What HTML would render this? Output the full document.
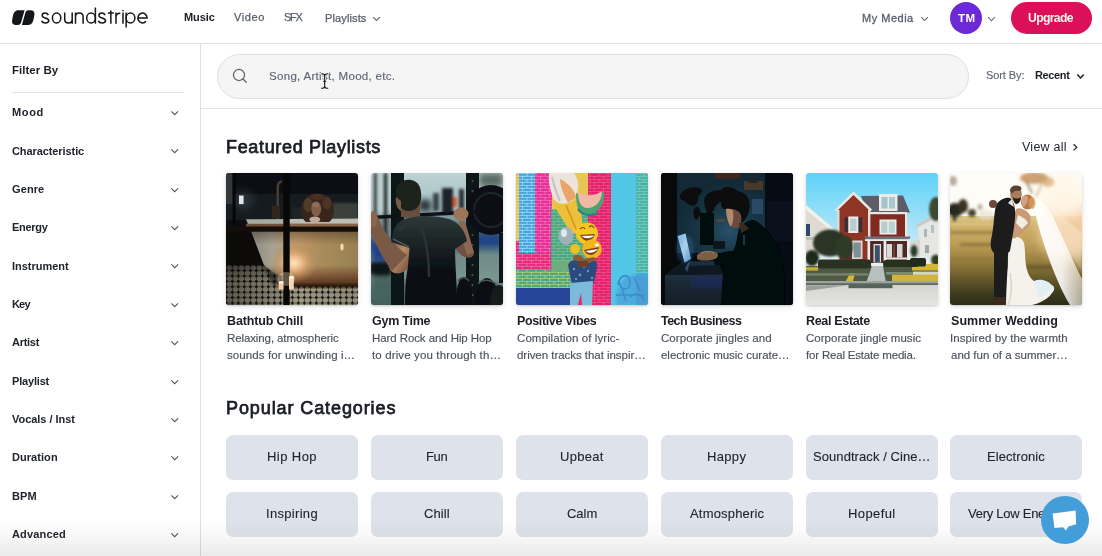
<!DOCTYPE html>
<html lang="en">
<head>
<meta charset="utf-8">
<title>Soundstripe</title>
<style>
*{box-sizing:border-box;margin:0;padding:0}
html,body{width:1102px;height:556px;overflow:hidden;background:#fff}
body{font-family:"Liberation Sans",sans-serif;color:#1b1e25;position:relative;font-size:12px}
.t{position:absolute;white-space:nowrap;line-height:20px;height:20px;will-change:transform}
.a{position:absolute}
#hdrline{left:0;top:43px;width:1102px;height:1px;background:#dcdfe5}
#sideline{left:200px;top:44px;width:1px;height:512px;background:#dcdfe5}
#fline{left:12px;top:92px;width:172px;height:1px;background:#dfe2e8}
#sline{left:201px;top:108px;width:901px;height:1px;background:#e1e4ea}
#avatar{left:950px;top:2px;width:32px;height:32px;border-radius:50%;background:#6c2ad6}
#upg{left:1011px;top:2px;width:81px;height:31.5px;border-radius:16px;background:#dc0f5a}
#sbox{left:217px;top:54px;width:752px;height:44.5px;border-radius:22.5px;background:#f5f5f6;border:1px solid #dcdfe6}
.card{position:absolute;top:173px;width:132px;height:132px;border-radius:3px;overflow:hidden;box-shadow:0 1px 2px rgba(20,25,35,.16),0 2px 6px rgba(20,25,35,.10)}
.card svg{display:block;width:132px;height:132px}
.cat{position:absolute;width:132.2px;height:45px;border-radius:7px;background:#dee2ea}
#fade{left:0;top:520px;width:1102px;height:36px;background:linear-gradient(to bottom,rgba(90,90,90,0),rgba(90,90,90,.04) 40%,rgba(90,90,90,.12))}
#chat{left:1041.2px;top:496.3px;width:47.6px;height:47.6px;border-radius:50%;background:#439dd9}
svg.i{position:absolute;overflow:visible}
</style>
</head>
<body>
<!-- header -->
<svg class="i" style="left:0;top:0" width="160" height="40" viewBox="0 0 160 40">
<g fill="#15161a">
<path id="lg" d="M18.2 10.3 L24.6 10.2 L21.1 22.6 Q20.4 25.0 18.2 25.0 L16.0 25.0 C13.0 25.0 11.6 23.0 12.1 20.4 L12.7 17.0 C13.6 12.4 15.2 10.3 18.2 10.3 Z"/>
<path d="M18.2 10.3 L24.6 10.2 L21.1 22.6 Q20.4 25.0 18.2 25.0 L16.0 25.0 C13.0 25.0 11.6 23.0 12.1 20.4 L12.7 17.0 C13.6 12.4 15.2 10.3 18.2 10.3 Z" transform="rotate(180 23.25 17.6)"/>
</g>
<g fill="none" stroke="#15161a" stroke-width="1.5">
<path d="M48.3 15.1 C47.7 13.8 46.6 13.1 45.1 13.1 C43.3 13.1 42.2 14.1 42.2 15.5 C42.2 17.0 43.6 17.5 45.2 17.9 C47.1 18.4 48.8 18.9 48.8 20.6 C48.8 22.1 47.4 23.0 45.4 23.0 C43.5 23.0 42.2 22.2 41.5 20.8"/>
<ellipse cx="56.6" cy="18.05" rx="4.2" ry="4.95"/>
<path d="M64.7 12.4 L64.7 19.2 C64.7 21.5 66.2 23.0 68.45 23.0 C70.7 23.0 72.2 21.5 72.2 19.2 M72.2 12.4 L72.2 23.7"/>
<path d="M75.5 23.7 L75.5 12.4 M75.5 16.9 C75.5 14.6 77.0 13.1 79.3 13.1 C81.6 13.1 83.1 14.6 83.1 16.9 L83.1 23.7"/>
<ellipse cx="91.05" cy="18.05" rx="4.35" ry="4.95"/>
<path d="M95.4 7.5 L95.4 23.7"/>
<path d="M48.3 15.1 C47.7 13.8 46.6 13.1 45.1 13.1 C43.3 13.1 42.2 14.1 42.2 15.5 C42.2 17.0 43.6 17.5 45.2 17.9 C47.1 18.4 48.8 18.9 48.8 20.6 C48.8 22.1 47.4 23.0 45.4 23.0 C43.5 23.0 42.2 22.2 41.5 20.8" transform="translate(56.75 0)"/>
<path d="M110.85 10.6 L110.85 23.7 M107.8 13.05 L113.8 13.05"/>
<path d="M116.0 23.7 L116.0 12.4 M116.0 17.4 C116.0 14.6 117.5 13.1 120.3 13.2"/>
<path d="M123.0 12.4 L123.0 23.7"/>
<path d="M126.15 12.4 L126.15 27.5"/>
<ellipse cx="130.5" cy="18.05" rx="4.37" ry="4.95"/>
<path d="M137.9 18.05 L147.1 18.05 A4.6 4.95 0 1 0 146.0 21.25"/>
</g>
<circle cx="123.0" cy="10.6" r="0.8" fill="#15161a"/>
</svg>

<div class="a" id="hdrline"></div>
<div class="a" id="avatar"></div>
<div class="a" id="upg"></div>
<svg class="i" style="left:373px;top:16.5px" width="7" height="4" viewBox="0 0 7 4"><path d="M0.2 0.2 L3.5 3.4 L6.8 0.2" fill="none" stroke="#5c626d" stroke-width="1.05"/></svg>
<svg class="i" style="left:921.3px;top:16.8px" width="7" height="4" viewBox="0 0 7 4"><path d="M0.2 0.2 L3.5 3.5 L6.8 0.2" fill="none" stroke="#5c626d" stroke-width="1.05"/></svg>
<svg class="i" style="left:988px;top:17.3px" width="7" height="4.4" viewBox="0 0 7 4.4"><path d="M0.2 0.2 L3.5 3.8 L6.8 0.2" fill="none" stroke="#5c626d" stroke-width="1.05"/></svg>

<!-- sidebar -->
<div class="a" id="sideline"></div>
<div class="a" id="fline"></div>
<svg class="i" style="left:170.8px;top:111px" width="7.4" height="4.4" viewBox="0 0 7.4 4.4"><path d="M0.3 0.3 L3.7 3.7 L7.1 0.3" fill="none" stroke="#4d525c" stroke-width="1.05"/></svg>
<svg class="i" style="left:170.8px;top:149px" width="7.4" height="4.4" viewBox="0 0 7.4 4.4"><path d="M0.3 0.3 L3.7 3.7 L7.1 0.3" fill="none" stroke="#4d525c" stroke-width="1.05"/></svg>
<svg class="i" style="left:170.8px;top:188px" width="7.4" height="4.4" viewBox="0 0 7.4 4.4"><path d="M0.3 0.3 L3.7 3.7 L7.1 0.3" fill="none" stroke="#4d525c" stroke-width="1.05"/></svg>
<svg class="i" style="left:170.8px;top:226px" width="7.4" height="4.4" viewBox="0 0 7.4 4.4"><path d="M0.3 0.3 L3.7 3.7 L7.1 0.3" fill="none" stroke="#4d525c" stroke-width="1.05"/></svg>
<svg class="i" style="left:170.8px;top:264px" width="7.4" height="4.4" viewBox="0 0 7.4 4.4"><path d="M0.3 0.3 L3.7 3.7 L7.1 0.3" fill="none" stroke="#4d525c" stroke-width="1.05"/></svg>
<svg class="i" style="left:170.8px;top:303px" width="7.4" height="4.4" viewBox="0 0 7.4 4.4"><path d="M0.3 0.3 L3.7 3.7 L7.1 0.3" fill="none" stroke="#4d525c" stroke-width="1.05"/></svg>
<svg class="i" style="left:170.8px;top:341px" width="7.4" height="4.4" viewBox="0 0 7.4 4.4"><path d="M0.3 0.3 L3.7 3.7 L7.1 0.3" fill="none" stroke="#4d525c" stroke-width="1.05"/></svg>
<svg class="i" style="left:170.8px;top:380px" width="7.4" height="4.4" viewBox="0 0 7.4 4.4"><path d="M0.3 0.3 L3.7 3.7 L7.1 0.3" fill="none" stroke="#4d525c" stroke-width="1.05"/></svg>
<svg class="i" style="left:170.8px;top:418px" width="7.4" height="4.4" viewBox="0 0 7.4 4.4"><path d="M0.3 0.3 L3.7 3.7 L7.1 0.3" fill="none" stroke="#4d525c" stroke-width="1.05"/></svg>
<svg class="i" style="left:170.8px;top:456px" width="7.4" height="4.4" viewBox="0 0 7.4 4.4"><path d="M0.3 0.3 L3.7 3.7 L7.1 0.3" fill="none" stroke="#4d525c" stroke-width="1.05"/></svg>
<svg class="i" style="left:170.8px;top:495px" width="7.4" height="4.4" viewBox="0 0 7.4 4.4"><path d="M0.3 0.3 L3.7 3.7 L7.1 0.3" fill="none" stroke="#4d525c" stroke-width="1.05"/></svg>
<svg class="i" style="left:170.8px;top:533px" width="7.4" height="4.4" viewBox="0 0 7.4 4.4"><path d="M0.3 0.3 L3.7 3.7 L7.1 0.3" fill="none" stroke="#4d525c" stroke-width="1.05"/></svg>

<!-- search -->
<div class="a" id="sline"></div>
<div class="a" id="sbox"></div>
<svg class="i" style="left:231.8px;top:68.1px" width="16" height="16" viewBox="0 0 16 16"><circle cx="7" cy="7" r="5.55" fill="none" stroke="#59606b" stroke-width="1.25"/><path d="M11.0 11.0 L14.3 14.4" stroke="#59606b" stroke-width="1.3" stroke-linecap="round"/></svg>
<svg class="i" style="left:1077.2px;top:74.4px" width="7" height="5" viewBox="0 0 7 5"><path d="M0.3 0.4 L3.5 3.9 L6.7 0.4" fill="none" stroke="#1b1e25" stroke-width="1.5"/></svg>
<svg class="i" style="left:1072.6px;top:144.3px" width="5" height="7" viewBox="0 0 5 7"><path d="M0.6 0.3 L3.8 3.3 L0.6 6.4" fill="none" stroke="#23272f" stroke-width="1.25"/></svg>

<!-- cards -->
<div class="card" style="left:226.4px"><svg viewBox="0 0 132 132">
<defs>
<filter id="b1a" x="-20%" y="-20%" width="140%" height="140%"><feGaussianBlur stdDeviation="1.2"/></filter>
<filter id="b1b" x="-30%" y="-30%" width="160%" height="160%"><feGaussianBlur stdDeviation="4"/></filter>
<filter id="b1c" x="-30%" y="-30%" width="160%" height="160%"><feGaussianBlur stdDeviation="0.6"/></filter>
<radialGradient id="g1glow" cx="0.5" cy="0.5" r="0.5"><stop offset="0" stop-color="#ffe6c4"/><stop offset="0.3" stop-color="#efbe8c"/><stop offset="0.7" stop-color="#c89860" stop-opacity="0.5"/><stop offset="1" stop-color="#a88850" stop-opacity="0"/></radialGradient>
<linearGradient id="g1tub" x1="0" x2="1" y1="0" y2="0"><stop offset="0" stop-color="#8a8a80"/><stop offset="0.2" stop-color="#a8a290"/><stop offset="0.42" stop-color="#c49a6c"/><stop offset="0.65" stop-color="#aa8c5c"/><stop offset="1" stop-color="#988052"/></linearGradient>
<linearGradient id="g1tubsh" x1="0" x2="0" y1="0" y2="1"><stop offset="0" stop-color="#3a2a1a" stop-opacity="0.45"/><stop offset="0.25" stop-color="#3a2a1a" stop-opacity="0"/><stop offset="0.62" stop-color="#5a2a18" stop-opacity="0"/><stop offset="0.82" stop-color="#5a2a18" stop-opacity="0.55"/><stop offset="1" stop-color="#3a1a0c" stop-opacity="0.85"/></linearGradient>
<pattern id="p1tile" width="6" height="5.4" patternUnits="userSpaceOnUse"><rect width="6" height="5.4" fill="#b4ad94"/><rect x="0" y="0" width="6" height="0.8" fill="#55524a"/><rect x="0" y="0" width="0.8" height="5.4" fill="#55524a"/><rect x="-0.8" y="-0.8" width="2.3" height="2.3" fill="#0e0d0b"/><rect x="5.2" y="-0.8" width="2.3" height="2.3" fill="#0e0d0b"/><rect x="-0.8" y="4.6" width="2.3" height="2.3" fill="#0e0d0b"/><rect x="5.2" y="4.6" width="2.3" height="2.3" fill="#0e0d0b"/></pattern>
<linearGradient id="g1fl" x1="0" x2="1" y1="0" y2="0"><stop offset="0" stop-color="#000" stop-opacity="0.5"/><stop offset="0.3" stop-color="#000" stop-opacity="0.3"/><stop offset="0.55" stop-color="#000" stop-opacity="0.12"/><stop offset="1" stop-color="#000" stop-opacity="0.2"/></linearGradient>
<linearGradient id="g1fl2" x1="0" x2="0" y1="0" y2="1"><stop offset="0" stop-color="#000" stop-opacity="0.35"/><stop offset="1" stop-color="#000" stop-opacity="0"/></linearGradient>
</defs>
<rect width="132" height="132" fill="#0b0e12"/>
<!-- wall band -->
<rect x="0" y="21" width="132" height="26" fill="#151b1f"/>
<rect x="100" y="30" width="32" height="17" fill="#3a3f3a" filter="url(#b1a)"/>
<rect x="66" y="34" width="14" height="12" fill="#1f2526" filter="url(#b1a)"/>
<!-- window glow -->
<ellipse cx="17" cy="27" rx="11" ry="9" fill="#3a4650" opacity="0.55" filter="url(#b1b)"/>
<rect x="13" y="22.5" width="4.6" height="8.6" fill="#dfe7ea" filter="url(#b1c)"/>
<rect x="0" y="0" width="6.6" height="31" fill="#34383a"/><rect x="6.6" y="0" width="3" height="52" fill="#050607"/>
<!-- faucet -->
<path d="M51.8 46 L51.8 14 C51.8 10 53.5 8.5 56 8.5" fill="none" stroke="#4a3c30" stroke-width="2.4" filter="url(#b1c)"/>
<rect x="46" y="33" width="8" height="12" fill="#33281f" filter="url(#b1c)"/>
<!-- left dark below bar -->
<rect x="0" y="56" width="40" height="38" fill="#0d0b09"/>
<!-- floor -->
<rect x="0" y="92.5" width="132" height="40" fill="url(#p1tile)"/>
<rect x="0" y="92.5" width="132" height="40" fill="url(#g1fl)"/>
<rect x="0" y="92.5" width="132" height="16" fill="url(#g1fl2)"/>
<!-- tub body -->
<path d="M25 58 L132 58 L132 113 L66 113 C61 113 59 108 57 103.5 C50 101 42 97 37.5 91 Z" fill="url(#g1tub)"/>
<path d="M25 58 L132 58 L132 113 L66 113 C61 113 59 108 57 103.5 C50 101 42 97 37.5 91 Z" fill="url(#g1tubsh)"/>
<ellipse cx="68" cy="90" rx="24" ry="20" fill="url(#g1glow)"/>
<ellipse cx="116" cy="74" rx="1.6" ry="3.4" fill="#f4dcb0" filter="url(#b1c)"/>
<!-- tub shadow on floor -->
<rect x="62" y="111.5" width="70" height="3.5" fill="#1a0f06" opacity="0.7" filter="url(#b1a)"/><path d="M38 93 C44 99 50 102 57 104.5 L57 112 L46 112 Z" fill="#0c0a08" opacity="0.55" filter="url(#b1a)"/>
<!-- rim -->
<path d="M20 46.3 L132 45.6 L132 51 L22 51 Z" fill="#a7aaa2"/>
<rect x="64" y="46" width="68" height="4.9" fill="#c2c2b8" opacity="0.8"/>
<!-- woman -->
<g filter="url(#b1c)">
<path d="M76 40 C74 30 80 21 90 20.5 C100 20 108 27 108 37 C108 43 106 47 103 49 L80 49 C77 47 76 44 76 40 Z" fill="#37261d"/>
<ellipse cx="82" cy="32" rx="4.5" ry="7" fill="#5e4230" opacity="0.75"/>
<ellipse cx="101" cy="30" rx="4.5" ry="6.5" fill="#563a2a" opacity="0.75"/>
<ellipse cx="91" cy="24" rx="7" ry="3" fill="#4e3628" opacity="0.7"/>
<ellipse cx="90.2" cy="36" rx="5" ry="7.6" fill="#80604c"/>
<ellipse cx="89.5" cy="31.5" rx="3.6" ry="2.6" fill="#94705a" opacity="0.8"/>
<ellipse cx="88.8" cy="46.6" rx="5.4" ry="3.2" fill="#c4a696"/>
</g>
<!-- bars -->
<rect x="20" y="50.8" width="112" height="3" fill="#6e5038"/><rect x="64" y="50.8" width="68" height="3" fill="#8a6446"/><rect x="0" y="53.6" width="132" height="5.1" fill="#140d09"/>
<rect x="57.3" y="0" width="6.4" height="132" fill="#080807"/>
<!-- candles -->
<g filter="url(#b1c)">
<ellipse cx="60" cy="106" rx="9" ry="7" fill="#ffdcb0" opacity="0.35"/>
<rect x="52.7" y="108.5" width="4.8" height="8" fill="#f3c8a4"/>
<rect x="63" y="103.5" width="4.8" height="13" fill="#f6d8b8"/>
<rect x="53" y="108.2" width="4.2" height="2.4" fill="#fff1dc"/>
<rect x="63.3" y="103.2" width="4.2" height="2.6" fill="#fff6e6"/>
</g>
</svg>
</div>
<div class="card" style="left:371.2px"><svg viewBox="0 0 132 132">
<defs>
<filter id="b2a" x="-20%" y="-20%" width="140%" height="140%"><feGaussianBlur stdDeviation="1.6"/></filter>
<filter id="b2b" x="-20%" y="-20%" width="140%" height="140%"><feGaussianBlur stdDeviation="3"/></filter>
<filter id="b2c" x="-20%" y="-20%" width="140%" height="140%"><feGaussianBlur stdDeviation="0.7"/></filter>
<linearGradient id="g2bg" x1="0" x2="0" y1="0" y2="1"><stop offset="0" stop-color="#bcd2d4"/><stop offset="0.27" stop-color="#a8c2c6"/><stop offset="0.4" stop-color="#5d757c"/><stop offset="0.52" stop-color="#2a4a7a"/><stop offset="0.62" stop-color="#6f8a88"/><stop offset="0.8" stop-color="#7a9690"/><stop offset="0.9" stop-color="#4a6664"/><stop offset="1" stop-color="#3f5a58"/></linearGradient>
<linearGradient id="g2sh" x1="0" x2="0" y1="0" y2="1"><stop offset="0" stop-color="#2e3838"/><stop offset="0.3" stop-color="#1c2426"/><stop offset="0.6" stop-color="#0a1016"/><stop offset="1" stop-color="#070c12"/></linearGradient>
<linearGradient id="g2skinL" x1="0" x2="1" y1="0" y2="1"><stop offset="0" stop-color="#7a543c"/><stop offset="0.5" stop-color="#b88a66"/><stop offset="1" stop-color="#6a4430"/></linearGradient>
</defs>
<rect width="132" height="132" fill="url(#g2bg)"/>
<!-- background blobs -->
<g filter="url(#b2b)">
<rect x="0" y="0" width="20" height="40" fill="#bfd0d0"/>
<rect x="0" y="46" width="22" height="20" fill="#7d8f92"/>
<rect x="0" y="68" width="22" height="20" fill="#1d3f86"/>
<rect x="0" y="90" width="22" height="14" fill="#0c1218"/>
<rect x="0" y="106" width="36" height="26" fill="#45635f"/>
<rect x="82" y="62" width="50" height="10" fill="#1f448a"/>
<rect x="108" y="0" width="24" height="14" fill="#5a6a62"/>
<rect x="48" y="27" width="12" height="11" fill="#1c262a"/>
</g>
<g filter="url(#b2a)">
<!-- background people -->
<rect x="71" y="15" width="11" height="26" fill="#1e2428"/>
<rect x="82" y="24" width="3.6" height="10" fill="#c65a2a"/>
<rect x="62" y="20" width="6" height="18" fill="#39424a"/>
<rect x="88" y="16" width="5" height="20" fill="#262c30"/>
<!-- thin bars left -->
<rect x="3" y="0" width="2.5" height="60" fill="#1a2226"/>
<rect x="13" y="0" width="3" height="70" fill="#141a1e"/>
<rect x="0" y="90" width="18" height="10" fill="#0e1418"/>
</g>
<!-- left rack post -->
<rect x="20" y="0" width="13" height="132" fill="#0f1418" filter="url(#b2c)"/>
<!-- right rack post -->
<rect x="95" y="0" width="13" height="132" fill="#0d1216" filter="url(#b2c)"/>
<g fill="#56666c" opacity="0.8"><circle cx="101.5" cy="8" r="1"/><circle cx="101.5" cy="18" r="1"/><circle cx="101.5" cy="28" r="1"/><circle cx="101.5" cy="52" r="1"/><circle cx="101.5" cy="62" r="1"/><circle cx="101.5" cy="72" r="1"/><circle cx="101.5" cy="82" r="1"/><circle cx="101.5" cy="92" r="1"/><circle cx="101.5" cy="102" r="1"/><circle cx="101.5" cy="112" r="1"/><circle cx="101.5" cy="122" r="1"/></g>
<!-- plates -->
<g filter="url(#b2c)">
<circle cx="120" cy="37" r="25" fill="#0b0f13"/>
<circle cx="120" cy="37" r="17" fill="none" stroke="#1d252b" stroke-width="2"/>
<rect x="128" y="60" width="4" height="50" fill="#10161a"/>
<ellipse cx="93" cy="126" rx="8" ry="22" fill="#0c1013"/>
<ellipse cx="116" cy="130" rx="12" ry="25" fill="#0c1013"/>
<ellipse cx="128" cy="132" rx="9" ry="20" fill="#151b1f"/>
<path d="M107 110 C112 106 120 106 126 112" fill="none" stroke="#4a545a" stroke-width="1.6"/>
<path d="M87 108 C90 104 95 104 98 108" fill="none" stroke="#3e484e" stroke-width="1.4"/>
</g>
<!-- barbell -->
<path d="M0 44.5 L112 38.5" stroke="#0e1216" stroke-width="3.4"/>
<!-- man -->
<g filter="url(#b2c)">
<!-- left arm -->
<path d="M21 66 C15 76 14 88 20 98 C26 103 34 100 38 93 L40 72 Z" fill="url(#g2skinL)"/>
<path d="M21 98 C12 86 4 70 0 60 L0 42 L7 44 C11 56 22 72 36 82 Z" fill="#7a5a46"/>
<ellipse cx="2.5" cy="46" rx="4" ry="8" fill="#8a6650"/>
<!-- right arm -->
<path d="M86 60 C94 66 102 72 103 80 C102 86 96 86 90 82 L82 72 Z" fill="#6e5040"/>
<path d="M103 80 C100 68 96 56 94 48 L88 48 C88 58 92 70 96 82 Z" fill="#8a6852"/>
<ellipse cx="90" cy="41" rx="7.5" ry="6.5" fill="#9a745a"/>
<!-- neck/head -->
<rect x="30" y="28" width="19" height="16" fill="#6b4e3e"/>
<path d="M25 22 C24 10 32 6 40 7 C48 8 51 16 50 26 C49 34 44 38 38 38 C30 38 26 32 25 22 Z" fill="#1d221f"/>
<path d="M25 24 C24 30 26 36 30 38 L30 28 Z" fill="#7a5a48"/>
<!-- shirt -->
<path d="M22 60 C24 50 32 45 42 44 C54 42 68 43 78 46 C88 49 94 58 96 68 L84 76 C84 90 86 110 86 132 L34 132 C34 116 35 104 37 93 L38.5 75 L20 69 Z" fill="url(#g2sh)"/>
<path d="M48 48 C54 62 58 80 58 104" fill="none" stroke="#2a3336" stroke-width="2.5"/>
<path d="M28 58 C32 52 38 50 44 50" fill="none" stroke="#2c3538" stroke-width="2.5"/>
<path d="M22 66 L38 74" stroke="#4a5a56" stroke-width="1.6"/>
</g>
</svg>
</div>
<div class="card" style="left:516.1px"><svg viewBox="0 0 132 132">
<defs>
<filter id="b3c" x="-20%" y="-20%" width="140%" height="140%"><feGaussianBlur stdDeviation="0.6"/></filter>
<filter id="b3a" x="-20%" y="-20%" width="140%" height="140%"><feGaussianBlur stdDeviation="1.2"/></filter>
<pattern id="p3br" width="9" height="6" patternUnits="userSpaceOnUse"><path d="M0 0.4 H9 M0 3.4 H9 M2 0 V3 M6.5 3 V6" stroke="#fff" stroke-opacity="0.28" stroke-width="0.9" fill="none"/></pattern>
<pattern id="p3br2" width="9" height="6" patternUnits="userSpaceOnUse"><path d="M0 0.4 H9 M0 3.4 H9 M2 0 V3 M6.5 3 V6" stroke="#d8e860" stroke-opacity="0.55" stroke-width="1" fill="none"/></pattern>
<pattern id="p3br3" width="9" height="6" patternUnits="userSpaceOnUse"><path d="M0 0.4 H9 M0 3.4 H9 M2 0 V3 M6.5 3 V6" stroke="#60e0f0" stroke-opacity="0.6" stroke-width="1.1" fill="none"/></pattern>
</defs>
<rect width="132" height="132" fill="#e8246e"/>
<!-- left yellow strip -->
<rect x="0" y="0" width="3.2" height="68" fill="#e6bc4c"/>
<!-- blue brick -->
<rect x="3" y="0" width="16.5" height="80" fill="#4e9fe0"/>
<rect x="3" y="0" width="16.5" height="80" fill="url(#p3br3)"/>
<!-- pink L -->
<rect x="19" y="0" width="17" height="97" fill="#e82e96"/>
<rect x="0" y="80" width="36" height="17" fill="#e82a7c"/>
<rect x="0" y="0" width="48" height="97" fill="url(#p3br)"/>
<!-- inner green/teal area -->
<rect x="35" y="34" width="38" height="63" fill="#48a68e"/>
<rect x="36" y="34" width="36" height="63" fill="url(#p3br2)" opacity="0.6"/>
<!-- yellow top middle -->
<rect x="36" y="0" width="38" height="36" fill="#e7c656"/>
<!-- teal band -->
<rect x="0" y="97" width="56" height="19" fill="#52a688"/>
<rect x="0" y="97" width="56" height="19" fill="url(#p3br2)"/>
<rect x="36" y="88" width="20" height="10" fill="#6fae7c"/>
<!-- bottom blue band -->
<rect x="0" y="115" width="56" height="17" fill="#27469a"/>
<!-- pink vertical band -->
<rect x="72" y="0" width="23" height="132" fill="#e6216c"/>
<rect x="72" y="0" width="23" height="132" fill="url(#p3br)" opacity="0.7"/>
<!-- cyan band -->
<rect x="95" y="0" width="25" height="132" fill="#52c6e6"/>
<!-- right strip -->
<rect x="120" y="0" width="12" height="100" fill="#56ae98"/>
<rect x="120" y="0" width="12" height="100" fill="url(#p3br3)"/>
<rect x="120" y="100" width="12" height="32" fill="#4aa8d8"/>
<!-- graffiti bottom right -->
<g filter="url(#b3c)" fill="none" stroke="#3578bc" stroke-width="1.6" opacity="0.85">
<path d="M102 112 C104 100 114 100 114 110 C114 118 104 118 104 110 M100 122 H128 M106 116 L110 128 M118 104 L124 118 M114 124 C120 118 126 122 128 128"/>
</g>
<path d="M104 112 C110 100 122 100 132 106 L132 132 L100 132 C100 124 100 118 104 112 Z" fill="#4696d6" opacity="0.55" filter="url(#b3a)"/>
<!-- balloons -->
<g filter="url(#b3c)">
<path d="M33 0 L58 0 C64 8 64 20 56 28 C50 32 42 32 38 26 C34 18 32 8 33 0 Z" fill="#ece4dc"/>
<path d="M44 6 C52 10 58 16 60 24 L52 30 C48 22 44 14 44 6 Z" fill="#e9a668"/>
<path d="M36 4 C38 12 40 20 44 28" stroke="#c8c0c0" stroke-width="2" fill="none"/>
<!-- cone -->
<path d="M35 28 C44 34 56 32 63 24 L68 62 L55 60 Z" fill="#ecc03a"/>
<path d="M50 32 L60 56" stroke="#d89018" stroke-width="1.5"/>
<!-- watermelon -->
<path d="M60 20 C70 26 82 24 88 18 C90 30 82 42 70 42 C64 42 60 36 60 20 Z" fill="#49a472"/>
<path d="M62 19 C70 24 80 23 86 18 C86 28 80 35 71 35 C66 35 62 30 62 19 Z" fill="#f2b8a6"/>
<path d="M62 36 C66 42 74 44 82 40" stroke="#2f7f8c" stroke-width="2.2" fill="none"/>
<!-- silver balloon -->
<ellipse cx="50" cy="63" rx="7.5" ry="9" fill="#9fb0ba"/>
<ellipse cx="48" cy="60" rx="3" ry="4" fill="#dfe8ec"/>
<!-- emoji 1 -->
<circle cx="71" cy="60.5" r="11" fill="#f7c71f"/>
<path d="M64 62 C68 70 76 70 79 61 Z" fill="#7a3f1c"/>
<path d="M65.5 63 C69 66 75 66 78 62.5 Z" fill="#fff"/>
<path d="M64 56 C66 54 68 54 69 56 M73 54 C75 52 77 53 78 55" stroke="#7a3f1c" stroke-width="1.2" fill="none"/>
<!-- emoji 2 -->
<circle cx="76" cy="76" r="9.8" fill="#f3b51c"/>
<path d="M68 77 C71 84 80 84 83 74 Z" fill="#7c3c1a"/>
<path d="M69.5 78 C73 81 79 80 82 76 Z" fill="#fff"/>
<ellipse cx="81" cy="72" rx="2" ry="1.5" fill="#fff"/>
<circle cx="59" cy="76" r="5" fill="#f0c024"/>
</g>
<!-- person -->
<g filter="url(#b3c)">
<path d="M57 84 C60 80 66 82 68 86 L78 84 C80 86 80 92 78 96 L60 98 Z" fill="#8b5a3a"/>
<path d="M52 92 C54 86 60 86 64 90 L74 90 C78 86 82 88 81 94 L78 110 L56 112 Z" fill="#294a7c"/>
<g fill="#7fb8d8" opacity="0.7"><circle cx="58" cy="96" r="1.3"/><circle cx="64" cy="102" r="1.4"/><circle cx="72" cy="98" r="1.2"/><circle cx="76" cy="105" r="1.3"/><circle cx="60" cy="106" r="1.2"/><circle cx="68" cy="94" r="1.1"/></g>
<path d="M54 110 L77 108 L76 132 L66 132 L65 120 L62 132 L54 132 Z" fill="#7bbada"/>
<rect x="62" y="88" width="10" height="6" fill="#6a4028"/>
</g>
</svg>
</div>
<div class="card" style="left:661px"><svg viewBox="0 0 132 132">
<defs>
<filter id="b4c" x="-20%" y="-20%" width="140%" height="140%"><feGaussianBlur stdDeviation="0.7"/></filter>
<filter id="b4a" x="-20%" y="-20%" width="140%" height="140%"><feGaussianBlur stdDeviation="1.8"/></filter>
<filter id="b4b" x="-40%" y="-40%" width="180%" height="180%"><feGaussianBlur stdDeviation="5"/></filter>
<radialGradient id="g4wall" cx="0.6" cy="0.72" r="0.6"><stop offset="0" stop-color="#27526c"/><stop offset="0.4" stop-color="#1a3a4a"/><stop offset="1" stop-color="#132a36"/></radialGradient>
<linearGradient id="g4scr" x1="0" x2="1" y1="0" y2="1"><stop offset="0" stop-color="#6fb6ea"/><stop offset="0.5" stop-color="#cfe6f6"/><stop offset="1" stop-color="#5a9ad0"/></linearGradient>
<linearGradient id="g4desk" x1="0" x2="0" y1="0" y2="1"><stop offset="0" stop-color="#223244"/><stop offset="0.3" stop-color="#1b2834"/><stop offset="1" stop-color="#151e28"/></linearGradient>
</defs>
<rect width="132" height="132" fill="#060a10"/>
<!-- wall -->
<rect x="15" y="0" width="89" height="80" fill="url(#g4wall)"/>
<rect x="0" y="0" width="16" height="132" fill="#07090b"/>
<rect x="104" y="0" width="28" height="132" fill="#070b13"/>
<rect x="106" y="28" width="26" height="40" fill="#0a111c"/>
<!-- posters -->
<g filter="url(#b4c)">
<rect x="54" y="0" width="25" height="5.5" fill="#40261f"/>
<rect x="83" y="8" width="19" height="9" fill="#473829"/>
<path d="M86 10 L92 5 L98 10 Z" fill="#2a221c"/>
<rect x="91" y="26" width="11" height="15" fill="#2b4a66"/>
<rect x="55" y="46" width="9" height="3" fill="#5a4a3a" opacity="0.7"/>
</g>
<!-- world map silhouette -->
<g fill="#070c11" filter="url(#b4c)">
<path d="M19 22 C22 16 30 13 38 15 C42 16 42 20 38 22 C36 26 38 30 34 32 C30 34 26 30 24 28 C20 27 18 25 19 22 Z"/>
<path d="M34 34 C38 33 40 37 39 41 C38 45 36 48 34 46 C32 42 32 37 34 34 Z"/>
<path d="M44 24 C48 18 56 16 64 18 C68 20 66 24 62 26 C60 30 56 30 54 34 C52 40 48 44 46 40 C44 34 42 28 44 24 Z"/>
<path d="M60 16 C66 12 74 14 78 20 L70 26 L62 24 Z"/>
</g>
<!-- dark monitor -->
<rect x="39" y="40" width="14" height="32" fill="#04070b" filter="url(#b4c)"/>
<rect x="52" y="68" width="12" height="8" fill="#0a141c" filter="url(#b4c)"/>
<!-- desk -->
<path d="M4 102 L69.5 101 L69.5 132 L4 132 Z" fill="url(#g4desk)"/>
<rect x="30" y="103" width="36" height="12" fill="#1b2c5c" opacity="0.7" filter="url(#b4a)"/>
<path d="M22 88 L70 87 L70 101 L4 102 Z" fill="#0f1820"/>
<path d="M26 88.5 L62 88 L58 92 L30 93 Z" fill="#1c2e42" filter="url(#b4c)"/>
<!-- laptop screen -->
<path d="M16.5 63 L24.5 60.5 L30 86 L23.5 89.5 Z" fill="url(#g4scr)" filter="url(#b4c)"/>
<ellipse cx="24" cy="76" rx="9" ry="14" fill="#4a90d0" opacity="0.25" filter="url(#b4a)"/>
<path d="M24 95 L27 90 L29 90 L26 99 Z" fill="#3a5a8a" opacity="0.8"/>
<!-- man body -->
<g filter="url(#b4c)">
<path d="M78 56 C84 48 92 44 98 50 C108 58 118 70 122 88 C124 104 124 120 124 132 L60 132 L62 100 C60 92 56 88 52 86 C56 80 64 78 72 78 C76 72 76 62 78 56 Z" fill="#05070a"/>
<path d="M52 86 C56 80 66 78 74 80 L74 90 C66 90 58 92 54 92 Z" fill="#06090c"/>
<!-- hair -->
<path d="M60 30 C60 20 70 16 80 19 C88 22 90 30 88 38 C86 44 84 48 80 50 L78 40 C74 36 68 36 64 36 C62 36 60 34 60 30 Z" fill="#090b0d"/>
<!-- face -->
<path d="M65 36 C70 35 76 36 79 40 C81 44 81 50 78 54 C75 56 71 55 69 53 C67 50 66 46 65.5 42 Z" fill="#6a4c3c"/>
<path d="M65 36 C68 35.5 71 36 72 38 C73 44 72 50 70 53.5 C68 52 66.5 47 65.5 42 Z" fill="#b08a70"/>
<path d="M78 50 C82 50 86 52 88 56 L80 60 Z" fill="#3a2a22"/>
<rect x="82" y="62" width="2" height="10" fill="#2a4a66" opacity="0.7"/>
<!-- hands -->
<path d="M36 82 C40 78 48 77 54 79 C58 80 58 84 54 86 C48 88 40 88 36 86 Z" fill="#7a5e44"/>
<path d="M40 80 C44 78 50 78 53 80" stroke="#9a7c6a" stroke-width="1.1" fill="none"/>
</g>
</svg>
</div>
<div class="card" style="left:805.9px"><svg viewBox="0 0 132 132">
<defs>
<filter id="b5c" x="-20%" y="-20%" width="140%" height="140%"><feGaussianBlur stdDeviation="0.5"/></filter>
<filter id="b5a" x="-20%" y="-20%" width="140%" height="140%"><feGaussianBlur stdDeviation="1.3"/></filter>
<linearGradient id="g5sky" x1="0" x2="0" y1="0" y2="1"><stop offset="0" stop-color="#5ed2fa"/><stop offset="0.28" stop-color="#90def8"/><stop offset="0.5" stop-color="#bfe6f4"/><stop offset="0.68" stop-color="#e8f0ee"/><stop offset="1" stop-color="#e8f0ee"/></linearGradient>
<linearGradient id="g5st" x1="0" x2="0" y1="0" y2="1"><stop offset="0" stop-color="#d4d5d1"/><stop offset="1" stop-color="#e5e5e1"/></linearGradient>
</defs>
<rect width="132" height="132" fill="url(#g5sky)"/>
<g filter="url(#b5c)">
<!-- left neighbor -->
<path d="M0 34 L26 56 L26 82 L0 82 Z" fill="#dfdbd3"/>
<path d="M0 32 L28 56 L26 58 L0 37 Z" fill="#f2f0ec"/>
<rect x="0" y="51" width="4" height="12" fill="#2f4a6c"/>
<rect x="0" y="64" width="20" height="3" fill="#c4beb4"/>
<!-- right neighbor -->
<path d="M112 52 L132 42 L132 84 L114 84 Z" fill="#e6e6e2"/>
<path d="M110 52 L132 40 L132 44 L112 54 Z" fill="#c9c9c6"/>
<rect x="118" y="56" width="3" height="8" fill="#aab6bc"/>
<rect x="125" y="52" width="3" height="8" fill="#b4c0c4"/>
<rect x="119" y="72" width="4" height="8" fill="#9aa6aa"/>
<path d="M104 70 L114 66 L114 84 L106 84 Z" fill="#d6d6d0"/>
<!-- roof right part -->
<path d="M55 23 L97 22.5 L104 39.5 L62 39.5 Z" fill="#5b5d66"/>
<!-- right section wall -->
<rect x="63" y="39.5" width="37" height="50" fill="#812c22"/>
<rect x="63" y="39" width="38" height="2.2" fill="#e9e5df"/>
<rect x="99" y="40" width="2.2" height="24" fill="#e9e5df"/>
<!-- dormer -->
<rect x="73" y="21" width="18.5" height="17" fill="#eeeae6"/>
<rect x="75.5" y="24" width="6" height="11.5" fill="#a4c4cc"/>
<rect x="83" y="24" width="6" height="11.5" fill="#a9c9d0"/>
<!-- 2nd floor window -->
<rect x="73.5" y="46.5" width="17" height="15" fill="#efece8"/>
<rect x="75.3" y="48.5" width="6" height="11.5" fill="#b4ced2"/>
<rect x="82.8" y="48.5" width="6" height="11.5" fill="#bad2d6"/>
<!-- gable left section -->
<path d="M32 36 L47.5 20.5 L64 36 L64 88 L32 88 Z" fill="#8f3427"/>
<path d="M29 36.5 L47.5 18.5 L66 36.5 L64.5 38.5 L47.5 22 L30.5 38.5 Z" fill="#ebe7e2"/>
<rect x="31.5" y="37" width="2" height="50" fill="#e4dfd8"/>
<rect x="62" y="37" width="2.4" height="50" fill="#e4dfd8"/>
<!-- upper left window + shutters -->
<rect x="38.5" y="44.5" width="4" height="14.5" fill="#383238"/>
<rect x="52.2" y="44.5" width="4" height="14.5" fill="#383238"/>
<rect x="42.3" y="43.5" width="10" height="16.5" fill="#f0ede9"/>
<rect x="44" y="45.5" width="6.6" height="12.5" fill="#b6ced0"/>
<!-- lower left window -->
<rect x="46" y="67.5" width="10.5" height="18.5" fill="#dedad6"/>
<rect x="47.8" y="69.5" width="7" height="15" fill="#7f8f96"/>
<rect x="40" y="72" width="6" height="14" fill="#5a3028"/>
<!-- porch -->
<rect x="62" y="66" width="41" height="24" fill="#4b2b26"/>
<path d="M58.5 63.5 L104.5 63.5 L103 67.5 L60 67.5 Z" fill="#6a717a"/>
<rect x="59" y="66.2" width="45" height="1.8" fill="#efece8"/>
<rect x="67.5" y="71" width="7.5" height="18.5" fill="#e4e0da"/>
<rect x="68.8" y="72.3" width="5" height="17" fill="#3b5068"/>
<rect x="80.5" y="71" width="5.5" height="13.5" fill="#d9dcdc"/>
<rect x="91" y="71" width="5.5" height="13.5" fill="#d4d8d8"/>
<rect x="87" y="71" width="2" height="14" fill="#7c3a30"/>
<rect x="61.5" y="67.5" width="2.6" height="22.5" fill="#f1eeea"/>
<rect x="77.6" y="67.5" width="2.6" height="22.5" fill="#f1eeea"/>
<rect x="101" y="67.5" width="2.6" height="22.5" fill="#f1eeea"/>
<rect x="80" y="84.5" width="22" height="2" fill="#e9e6e2"/>
</g>
<!-- trees / bushes -->
<g filter="url(#b5a)">
<ellipse cx="24" cy="70" rx="17" ry="13.5" fill="#2b3526"/>
<ellipse cx="38" cy="74" rx="9" ry="12" fill="#2f3a28"/>
<ellipse cx="6" cy="85" rx="7" ry="8" fill="#1f2a1b"/>
<ellipse cx="130" cy="36" rx="7" ry="12" fill="#3c4a31"/>
<ellipse cx="108" cy="78" rx="3.5" ry="6" fill="#2c3a2a"/>
<ellipse cx="130" cy="87" rx="5" ry="5.5" fill="#2f3c24"/>
</g>
<!-- lawn -->
<rect x="0" y="93" width="132" height="17" fill="#4e5a44"/>
<g filter="url(#b5c)">
<rect x="0" y="94.2" width="12" height="3.4" fill="#c4ac40"/>
<rect x="106" y="91" width="26" height="6.5" fill="#d6b636"/>
<rect x="86" y="101.5" width="46" height="6.5" fill="#d3b43a"/>
<path d="M40 108 L44 100 L49 100 L47 108 Z" fill="#d6b830"/>
<rect x="0" y="100.2" width="62" height="2.4" fill="#74826c"/>
<rect x="80" y="99" width="27" height="2.6" fill="#7c8a74"/><rect x="107" y="98.6" width="25" height="3.2" fill="#d6d6c6"/>
<!-- hedges -->
<rect x="12" y="86.5" width="53" height="9" rx="3" fill="#293320"/>
<rect x="77" y="87" width="36" height="7" rx="3" fill="#27311f"/>
<rect x="104" y="85" width="16" height="8.5" rx="2" fill="#222c1b"/>
<!-- walkway -->
<path d="M66 93 L77 93 L80 110 L60 110 Z" fill="#b7bfbf"/>
<!-- sidewalk + curb -->
<rect x="0" y="108" width="132" height="3" fill="#9ea29e"/>
<rect x="0" y="110.2" width="132" height="2.1" fill="#5e6a62"/>
</g>
<rect x="0" y="112" width="132" height="20" fill="url(#g5st)"/>
<rect x="42.5" y="111.6" width="44" height="3.6" fill="#56645c" filter="url(#b5c)"/>
<path d="M0 112.3 L42 112.3 L0 118 Z" fill="#9c9e9a" filter="url(#b5c)"/>
</svg>
</div>
<div class="card" style="left:950.4px"><svg viewBox="0 0 132 132">
<defs>
<filter id="b6c" x="-20%" y="-20%" width="140%" height="140%"><feGaussianBlur stdDeviation="0.6"/></filter>
<filter id="b6a" x="-20%" y="-20%" width="140%" height="140%"><feGaussianBlur stdDeviation="1.5"/></filter>
<filter id="b6b" x="-40%" y="-40%" width="180%" height="180%"><feGaussianBlur stdDeviation="6"/></filter>
<linearGradient id="g6f" x1="0" x2="0" y1="0" y2="1"><stop offset="0" stop-color="#dcc88a"/><stop offset="0.12" stop-color="#ccb068"/><stop offset="0.3" stop-color="#bea058"/><stop offset="0.5" stop-color="#9a8040"/><stop offset="0.7" stop-color="#68592b"/><stop offset="0.86" stop-color="#403d1f"/><stop offset="1" stop-color="#2a2c16"/></linearGradient>
<linearGradient id="g6v" x1="0" x2="1" y1="0" y2="0"><stop offset="0" stop-color="#fff" stop-opacity="0.97"/><stop offset="0.6" stop-color="#fff" stop-opacity="0.88"/><stop offset="1" stop-color="#fff6ea" stop-opacity="0.6"/></linearGradient>
</defs>
<rect width="132" height="132" fill="#fdfcf7"/>
<!-- field -->
<rect x="0" y="43" width="132" height="89" fill="url(#g6f)"/>
<g filter="url(#b6a)" opacity="0.55">
<rect x="0" y="58" width="50" height="3" fill="#7a6430"/>
<rect x="10" y="70" width="40" height="3" fill="#6a5428"/>
<rect x="0" y="84" width="44" height="4" fill="#8a7438"/>
<rect x="70" y="76" width="40" height="3" fill="#b89a58"/>
<rect x="0" y="50" width="60" height="3" fill="#e0cc8c"/>
<rect x="76" y="92" width="30" height="4" fill="#5a4c24"/>
</g>
<!-- right glow -->
<ellipse cx="118" cy="56" rx="30" ry="30" fill="#f6cfa6" opacity="0.85" filter="url(#b6b)"/>
<ellipse cx="112" cy="22" rx="26" ry="22" fill="#fff6e6" opacity="0.9" filter="url(#b6b)"/>
<!-- orange tree leaves top -->
<g filter="url(#b6a)">
<ellipse cx="84" cy="5" rx="14" ry="6" fill="#c4915a" opacity="0.85"/>
<ellipse cx="98" cy="9" rx="6" ry="5" fill="#d6a66c" opacity="0.7"/>
<path d="M76 8 L82 20" stroke="#8a6a40" stroke-width="1.5"/>
<path d="M92 10 L86 24" stroke="#b8925c" stroke-width="1.5" opacity="0.7"/>
<ellipse cx="3" cy="8" rx="4" ry="5" fill="#9a8c70" opacity="0.7"/>
<!-- tree line left -->
<ellipse cx="5" cy="37" rx="8" ry="7" fill="#25271a"/>
<ellipse cx="13" cy="33" rx="5" ry="7" fill="#3a3320"/>
<ellipse cx="22" cy="40" rx="4" ry="4" fill="#4a4228"/>
<rect x="3" y="40" width="3" height="8" fill="#25271a"/>
<ellipse cx="30" cy="34" rx="2.5" ry="3" fill="#8a7a58" opacity="0.6"/>
<ellipse cx="36" cy="42" rx="8" ry="5" fill="#e8e0d0" opacity="0.7"/>
</g>
<!-- veil -->
<path d="M82 26 C88 24 95 30 100 38 C110 58 122 86 132 106 L132 132 L120 132 C110 116 99 88 91 62 C87 48 84 36 82 26 Z" fill="url(#g6v)" filter="url(#b6c)"/>
<path d="M86 30 C96 40 112 70 132 100 L132 60 C120 50 104 36 92 28 Z" fill="#fff4e6" opacity="0.35" filter="url(#b6a)"/>
<!-- bride dress -->
<g filter="url(#b6c)">
<path d="M62 66 C66 62 72 64 74 70 C76 80 74 90 78 100 C82 110 92 114 100 112 C104 112 106 116 102 120 C98 126 90 130 82 132 L54 132 C54 120 56 104 58 92 C58 82 58 72 62 66 Z" fill="#f5f2ec"/>
<path d="M84 108 C90 105 98 107 104 114 C100 120 94 124 88 124 Z" fill="#e2f0f4"/>
<path d="M60 100 C62 110 62 122 58 132" stroke="#d8d2c6" stroke-width="1.4" fill="none"/>
<!-- bride skin -->
<path d="M66 36 C70 34 76 36 80 42 C82 48 80 54 74 58 C70 62 66 64 64 66 L62 54 C64 48 64 42 66 36 Z" fill="#c99a78"/>
<path d="M68 42 C72 44 76 46 78 50 L72 56 L66 50 Z" fill="#f1ece4"/>
<!-- bride head -->
<ellipse cx="77.5" cy="29" rx="6.5" ry="7.5" fill="#b8784a"/>
<path d="M72 24 C74 22 77 22 78 25 C78 29 76 33 73 34 C71 31 71 27 72 24 Z" fill="#d3a282"/>
<ellipse cx="82" cy="30" rx="3.5" ry="6" fill="#d89a60" opacity="0.8"/>
<!-- groom -->
<path d="M46 32 C50 26 56 24 60 25 C64 28 66 36 65 46 C64 56 62 66 60 78 L56 82 L44 80 C40 76 40 70 42 62 C44 52 44 40 46 32 Z" fill="#1a1c1b"/>
<path d="M44 78 L58 80 C58 96 56 114 56 132 L44 132 C44 116 44 98 44 78 Z" fill="#1c1e1e"/>
<path d="M58 30 L62 26 L64 34 Z" fill="#e8e4de"/>
<ellipse cx="66" cy="21" rx="5.8" ry="7.5" fill="#a87c5c"/>
<path d="M60 18 C60 13 66 11 71 14 C72 16 71 18 69 18 C66 17 63 18 62 21 Z" fill="#5c4230"/>
<path d="M63 24 C65 26 69 26 71 24 C71 28 69 31 66 31 C64 30 63 27 63 24 Z" fill="#2c1e16"/>
<ellipse cx="43" cy="31" rx="4" ry="4" fill="#6c4a3a"/>
<rect x="44" y="124" width="12" height="8" fill="#3a2a1c"/>
</g>
</svg>
</div>

<!-- categories -->
<div class="cat" style="left:226px;top:435px"></div>
<div class="cat" style="left:371px;top:435px"></div>
<div class="cat" style="left:516px;top:435px"></div>
<div class="cat" style="left:661px;top:435px"></div>
<div class="cat" style="left:806px;top:435px"></div>
<div class="cat" style="left:950.2px;top:435px"></div>
<div class="cat" style="left:226px;top:492.1px"></div>
<div class="cat" style="left:371px;top:492.1px"></div>
<div class="cat" style="left:516px;top:492.1px"></div>
<div class="cat" style="left:661px;top:492.1px"></div>
<div class="cat" style="left:806px;top:492.1px"></div>
<div class="cat" style="left:950.2px;top:492.1px"></div>

<div class="t" style="left:183.60px;top:7.09px;font-size:11px;letter-spacing:-0.089px;color:#1b1e25;font-weight:bold;">Music</div>
<div class="t" style="left:234.00px;top:7.09px;font-size:11px;letter-spacing:0.596px;color:#585e6a;-webkit-text-stroke:0.25px #585e6a;">Video</div>
<div class="t" style="left:284.40px;top:7.09px;font-size:11px;letter-spacing:-1.328px;color:#585e6a;-webkit-text-stroke:0.25px #585e6a;">SFX</div>
<div class="t" style="left:324.50px;top:8.09px;font-size:11px;letter-spacing:0.120px;color:#585e6a;-webkit-text-stroke:0.25px #585e6a;">Playlists</div>
<div class="t" style="left:861.90px;top:8.39px;font-size:11px;letter-spacing:0.505px;color:#585e6a;-webkit-text-stroke:0.3px #585e6a;">My Media</div>
<div class="t" style="left:958.00px;top:8.22px;font-size:11.5px;letter-spacing:0.575px;color:#ffffff;font-weight:bold;">TM</div>
<div class="t" style="left:1028.40px;top:7.77px;font-size:12.2px;letter-spacing:-0.659px;color:#fff3ea;font-weight:bold;">Upgrade</div>
<div class="t" style="left:12.40px;top:60.32px;font-size:11.5px;letter-spacing:0.011px;color:#1b1e25;font-weight:bold;">Filter By</div>
<div class="t" style="left:12.30px;top:102.19px;font-size:11px;letter-spacing:0.633px;color:#20242c;font-weight:bold;">Mood</div>
<div class="t" style="left:12.30px;top:140.55px;font-size:11px;letter-spacing:-0.089px;color:#20242c;font-weight:bold;">Characteristic</div>
<div class="t" style="left:12.30px;top:178.91px;font-size:11px;letter-spacing:0.107px;color:#20242c;font-weight:bold;">Genre</div>
<div class="t" style="left:12.30px;top:217.27px;font-size:11px;letter-spacing:-0.275px;color:#20242c;font-weight:bold;">Energy</div>
<div class="t" style="left:12.30px;top:255.63px;font-size:11px;letter-spacing:-0.019px;color:#20242c;font-weight:bold;">Instrument</div>
<div class="t" style="left:12.30px;top:293.99px;font-size:11px;letter-spacing:-0.831px;color:#20242c;font-weight:bold;">Key</div>
<div class="t" style="left:12.30px;top:332.35px;font-size:11px;letter-spacing:-0.272px;color:#20242c;font-weight:bold;">Artist</div>
<div class="t" style="left:12.30px;top:370.71px;font-size:11px;letter-spacing:-0.180px;color:#20242c;font-weight:bold;">Playlist</div>
<div class="t" style="left:12.30px;top:409.07px;font-size:11px;letter-spacing:-0.034px;color:#20242c;font-weight:bold;">Vocals / Inst</div>
<div class="t" style="left:12.30px;top:447.43px;font-size:11px;letter-spacing:0.057px;color:#20242c;font-weight:bold;">Duration</div>
<div class="t" style="left:12.30px;top:485.79px;font-size:11px;letter-spacing:0.110px;color:#20242c;font-weight:bold;">BPM</div>
<div class="t" style="left:12.30px;top:524.15px;font-size:11px;letter-spacing:0.164px;color:#20242c;font-weight:bold;">Advanced</div>
<div class="t" style="left:268.70px;top:65.92px;font-size:11.5px;letter-spacing:0.312px;color:#5f6673;-webkit-text-stroke:0.15px #5f6673;">Song, Artist, Mood, etc.</div>
<div class="t" style="left:985.60px;top:65.19px;font-size:11px;letter-spacing:-0.081px;color:#5f6673;-webkit-text-stroke:0.15px #5f6673;">Sort By:</div>
<div class="t" style="left:1034.90px;top:65.19px;font-size:11px;letter-spacing:-0.363px;color:#1b1e25;font-weight:bold;">Recent</div>
<div class="t" style="left:226.40px;top:136.76px;font-size:18px;letter-spacing:0.661px;color:#1b1e25;-webkit-text-stroke:0.75px #1b1e25;">Featured Playlists</div>
<div class="t" style="left:226.10px;top:398.16px;font-size:18px;letter-spacing:0.901px;color:#1b1e25;-webkit-text-stroke:0.75px #1b1e25;">Popular Categories</div>
<div class="t" style="left:1022.00px;top:136.57px;font-size:12.5px;letter-spacing:0.247px;color:#23272f;">View all</div>
<div class="t" style="left:226.80px;top:310.67px;font-size:12.5px;letter-spacing:-0.133px;color:#1b1e25;font-weight:bold;">Bathtub Chill</div>
<div class="t" style="left:226.80px;top:328.12px;font-size:11.5px;letter-spacing:-0.106px;color:#4b505b;-webkit-text-stroke:0.15px #4b505b;">Relaxing, atmospheric</div>
<div class="t" style="left:226.80px;top:345.42px;font-size:11.5px;letter-spacing:0.099px;color:#4b505b;-webkit-text-stroke:0.15px #4b505b;">sounds for unwinding i…</div>
<div class="t" style="left:371.60px;top:310.67px;font-size:12.5px;letter-spacing:-0.237px;color:#1b1e25;font-weight:bold;">Gym Time</div>
<div class="t" style="left:371.60px;top:328.12px;font-size:11.5px;letter-spacing:-0.088px;color:#4b505b;-webkit-text-stroke:0.15px #4b505b;">Hard Rock and Hip Hop</div>
<div class="t" style="left:371.60px;top:345.42px;font-size:11.5px;letter-spacing:0.129px;color:#4b505b;-webkit-text-stroke:0.15px #4b505b;">to drive you through th…</div>
<div class="t" style="left:516.80px;top:310.67px;font-size:12.5px;letter-spacing:-0.368px;color:#1b1e25;font-weight:bold;">Positive Vibes</div>
<div class="t" style="left:516.80px;top:328.12px;font-size:11.5px;letter-spacing:0.073px;color:#4b505b;-webkit-text-stroke:0.15px #4b505b;">Compilation of lyric-</div>
<div class="t" style="left:516.80px;top:345.42px;font-size:11.5px;letter-spacing:-0.042px;color:#4b505b;-webkit-text-stroke:0.15px #4b505b;">driven tracks that inspir…</div>
<div class="t" style="left:661.10px;top:310.67px;font-size:12.5px;letter-spacing:-0.537px;color:#1b1e25;font-weight:bold;">Tech Business</div>
<div class="t" style="left:661.10px;top:328.12px;font-size:11.5px;letter-spacing:0.069px;color:#4b505b;-webkit-text-stroke:0.15px #4b505b;">Corporate jingles and</div>
<div class="t" style="left:661.10px;top:345.42px;font-size:11.5px;letter-spacing:-0.022px;color:#4b505b;-webkit-text-stroke:0.15px #4b505b;">electronic music curate…</div>
<div class="t" style="left:806.00px;top:310.67px;font-size:12.5px;letter-spacing:-0.324px;color:#1b1e25;font-weight:bold;">Real Estate</div>
<div class="t" style="left:806.00px;top:328.12px;font-size:11.5px;letter-spacing:0.026px;color:#4b505b;-webkit-text-stroke:0.15px #4b505b;">Corporate jingle music</div>
<div class="t" style="left:806.00px;top:345.42px;font-size:11.5px;letter-spacing:-0.185px;color:#4b505b;-webkit-text-stroke:0.15px #4b505b;">for Real Estate media.</div>
<div class="t" style="left:951.10px;top:310.67px;font-size:12.5px;letter-spacing:0.062px;color:#1b1e25;font-weight:bold;">Summer Wedding</div>
<div class="t" style="left:950.10px;top:328.12px;font-size:11.5px;letter-spacing:0.065px;color:#4b505b;-webkit-text-stroke:0.15px #4b505b;">Inspired by the warmth</div>
<div class="t" style="left:951.10px;top:345.42px;font-size:11.5px;letter-spacing:-0.014px;color:#4b505b;-webkit-text-stroke:0.15px #4b505b;">and fun of a summer…</div>
<div class="t" style="left:267.30px;top:446.80px;font-size:13px;letter-spacing:0.427px;color:#20242c;-webkit-text-stroke:0.1px #20242c;">Hip Hop</div>
<div class="t" style="left:425.60px;top:446.80px;font-size:13px;letter-spacing:-0.335px;color:#20242c;-webkit-text-stroke:0.1px #20242c;">Fun</div>
<div class="t" style="left:559.80px;top:446.80px;font-size:13px;letter-spacing:0.298px;color:#20242c;-webkit-text-stroke:0.1px #20242c;">Upbeat</div>
<div class="t" style="left:706.60px;top:446.80px;font-size:13px;letter-spacing:0.330px;color:#20242c;-webkit-text-stroke:0.1px #20242c;">Happy</div>
<div class="t" style="left:812.70px;top:446.80px;font-size:13px;letter-spacing:0.069px;color:#20242c;-webkit-text-stroke:0.1px #20242c;">Soundtrack / Cine…</div>
<div class="t" style="left:986.80px;top:446.80px;font-size:13px;letter-spacing:0.069px;color:#20242c;-webkit-text-stroke:0.1px #20242c;">Electronic</div>
<div class="t" style="left:266.10px;top:503.80px;font-size:13px;letter-spacing:0.312px;color:#20242c;-webkit-text-stroke:0.1px #20242c;">Inspiring</div>
<div class="t" style="left:424.30px;top:503.80px;font-size:13px;letter-spacing:0.076px;color:#20242c;-webkit-text-stroke:0.1px #20242c;">Chill</div>
<div class="t" style="left:567.10px;top:503.80px;font-size:13px;letter-spacing:-0.035px;color:#20242c;-webkit-text-stroke:0.1px #20242c;">Calm</div>
<div class="t" style="left:689.60px;top:503.80px;font-size:13px;letter-spacing:0.185px;color:#20242c;-webkit-text-stroke:0.1px #20242c;">Atmospheric</div>
<div class="t" style="left:847.60px;top:503.80px;font-size:13px;letter-spacing:0.397px;color:#20242c;-webkit-text-stroke:0.1px #20242c;">Hopeful</div>
<div class="t" style="left:967.90px;top:503.80px;font-size:13px;letter-spacing:-0.262px;color:#20242c;-webkit-text-stroke:0.1px #20242c;">Very Low Energy</div>

<!-- I-beam cursor -->
<svg class="i" style="left:320.8px;top:73px" width="7.4" height="16" viewBox="0 0 7.4 16"><g fill="none" stroke-linecap="round"><path d="M0.6 0.7 C2.4 0.7 3.7 1.5 3.7 2.8 L3.7 13.2 C3.7 14.5 2.4 15.3 0.6 15.3 M6.8 0.7 C5.0 0.7 3.7 1.5 3.7 2.8 M3.7 13.2 C3.7 14.5 5.0 15.3 6.8 15.3 M2.6 8.3 L4.8 8.3" stroke="#f7f7f8" stroke-width="2.6"/><path d="M0.6 0.7 C2.4 0.7 3.7 1.5 3.7 2.8 L3.7 13.2 C3.7 14.5 2.4 15.3 0.6 15.3 M6.8 0.7 C5.0 0.7 3.7 1.5 3.7 2.8 M3.7 13.2 C3.7 14.5 5.0 15.3 6.8 15.3 M2.6 8.3 L4.8 8.3" stroke="#121418" stroke-width="1.1"/></g></svg>

<div class="a" id="fade"></div>
<div class="a" id="chat"></div>
<svg class="i" style="left:1052px;top:510px" width="26" height="22" viewBox="0 0 26 22"><path d="M0.6 3.4 L23.6 0.6 L24.2 14.2 L16.4 16.6 L14.0 20.6 L11.0 17.3 L2.4 18.0 Z" fill="#fff"/></svg>
</body>
</html>
